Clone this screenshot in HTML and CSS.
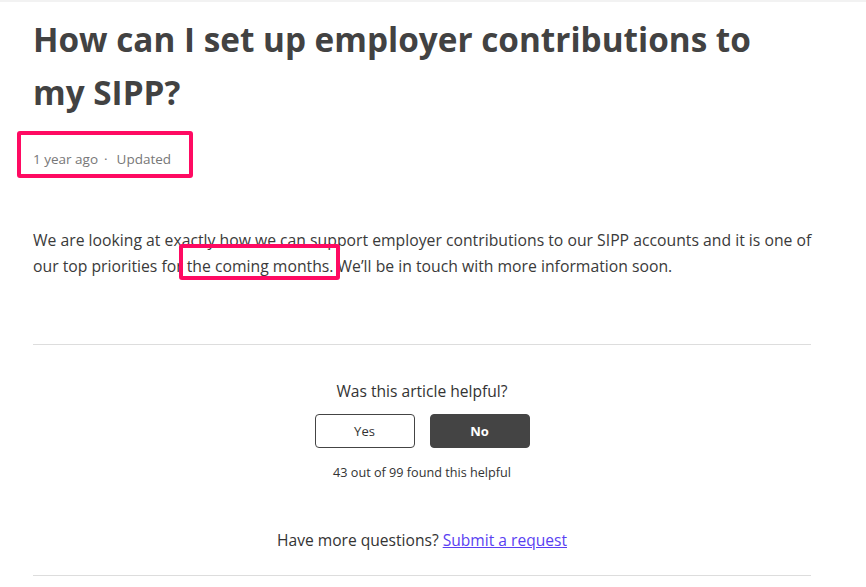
FILE: index.html
```html
<!DOCTYPE html>
<html lang="en">
<head>
<meta charset="utf-8">
<title>How can I set up employer contributions to my SIPP?</title>
<link rel="stylesheet" href="styles.css">
</head>
<body>
<div class="topline"></div>
<article class="article">
  <h1 class="title">How can I set up employer contributions to my SIPP?</h1>
  <div class="meta">
    <span class="meta-item">1 year ago</span><span class="dot">·</span><span class="meta-item">Updated</span>
    <span class="mark mark-meta"></span>
  </div>
  <div class="body">
    <p class="para">We are looking at exactly how we can support employer contributions to our SIPP accounts and it is one of our top priorities for the coming months. We’ll be in touch with more information soon.</p>
    <span class="mark mark-body"></span>
  </div>
  <footer class="foot">
    <div class="vote">
      <div class="vote-title">Was this article helpful?</div>
      <div class="vote-buttons">
        <button class="btn btn-yes">Yes</button>
        <button class="btn btn-no">No</button>
      </div>
      <div class="vote-count">43 out of 99 found this helpful</div>
    </div>
    <div class="more">Have more questions? <a class="link" href="#">Submit a request</a></div>
  </footer>
</article>
</body>
</html>
```

FILE: styles.css
```css
html, body {
  margin: 0;
  padding: 0;
  background: #fff;
}
body {
  font-family: "Open Sans", "Noto Sans", sans-serif;
  color: #333;
}
.topline {
  height: 2px;
  background: #f2f2f2;
}
.article {
  width: 778px;
  margin-left: 33px;
}
.title {
  max-width: 740px;
  margin: 11px 0 0;
  font-size: 33.3px;
  line-height: 53px;
  font-weight: 700;
  color: #424242;
}
.meta {
  position: relative;
  margin-top: 30px;
  font-size: 13.5px;
  line-height: 20px;
  color: #777;
  display: flex;
  align-items: center;
}
.dot {
  margin: 0 9px 0 6px;
}
.mark {
  position: absolute;
  border: 4px solid #ff0a62;
  border-radius: 3px;
  box-sizing: border-box;
}
.mark-meta {
  left: -16px;
  top: -18px;
  width: 176px;
  height: 47px;
}
.body {
  position: relative;
  margin-top: 58px;
}
.para {
  margin: 0 -10px 0 0;
  font-size: 15.75px;
  line-height: 26px;
  color: #3a3a3a;
}
.mark-body {
  left: 146px;
  top: 17px;
  width: 161px;
  height: 36px;
}
.foot {
  margin-top: 65px;
  border-top: 1px solid #ddd;
  border-bottom: 1px solid #ddd;
  padding: 35px 0 24px;
  text-align: center;
}
.vote-title {
  font-size: 15.6px;
  line-height: 22px;
  color: #333;
}
.vote-buttons {
  display: flex;
  justify-content: center;
  gap: 15px;
  margin-top: 12px;
}
.btn {
  width: 100px;
  height: 34px;
  border-radius: 4px;
  font-family: inherit;
  font-size: 13px;
  cursor: pointer;
}
.btn-yes {
  background: #fff;
  border: 1px solid #444;
  color: #333;
}
.btn-no {
  background: #444;
  border: 1px solid #444;
  color: #fff;
  font-weight: 700;
}
.vote-count {
  margin-top: 15px;
  font-size: 12.65px;
  line-height: 18px;
  color: #333;
}
.more {
  margin-top: 48px;
  font-size: 15.6px;
  line-height: 22px;
  color: #333;
}
.link {
  color: #5a3ff2;
  text-decoration: underline;
}
```
